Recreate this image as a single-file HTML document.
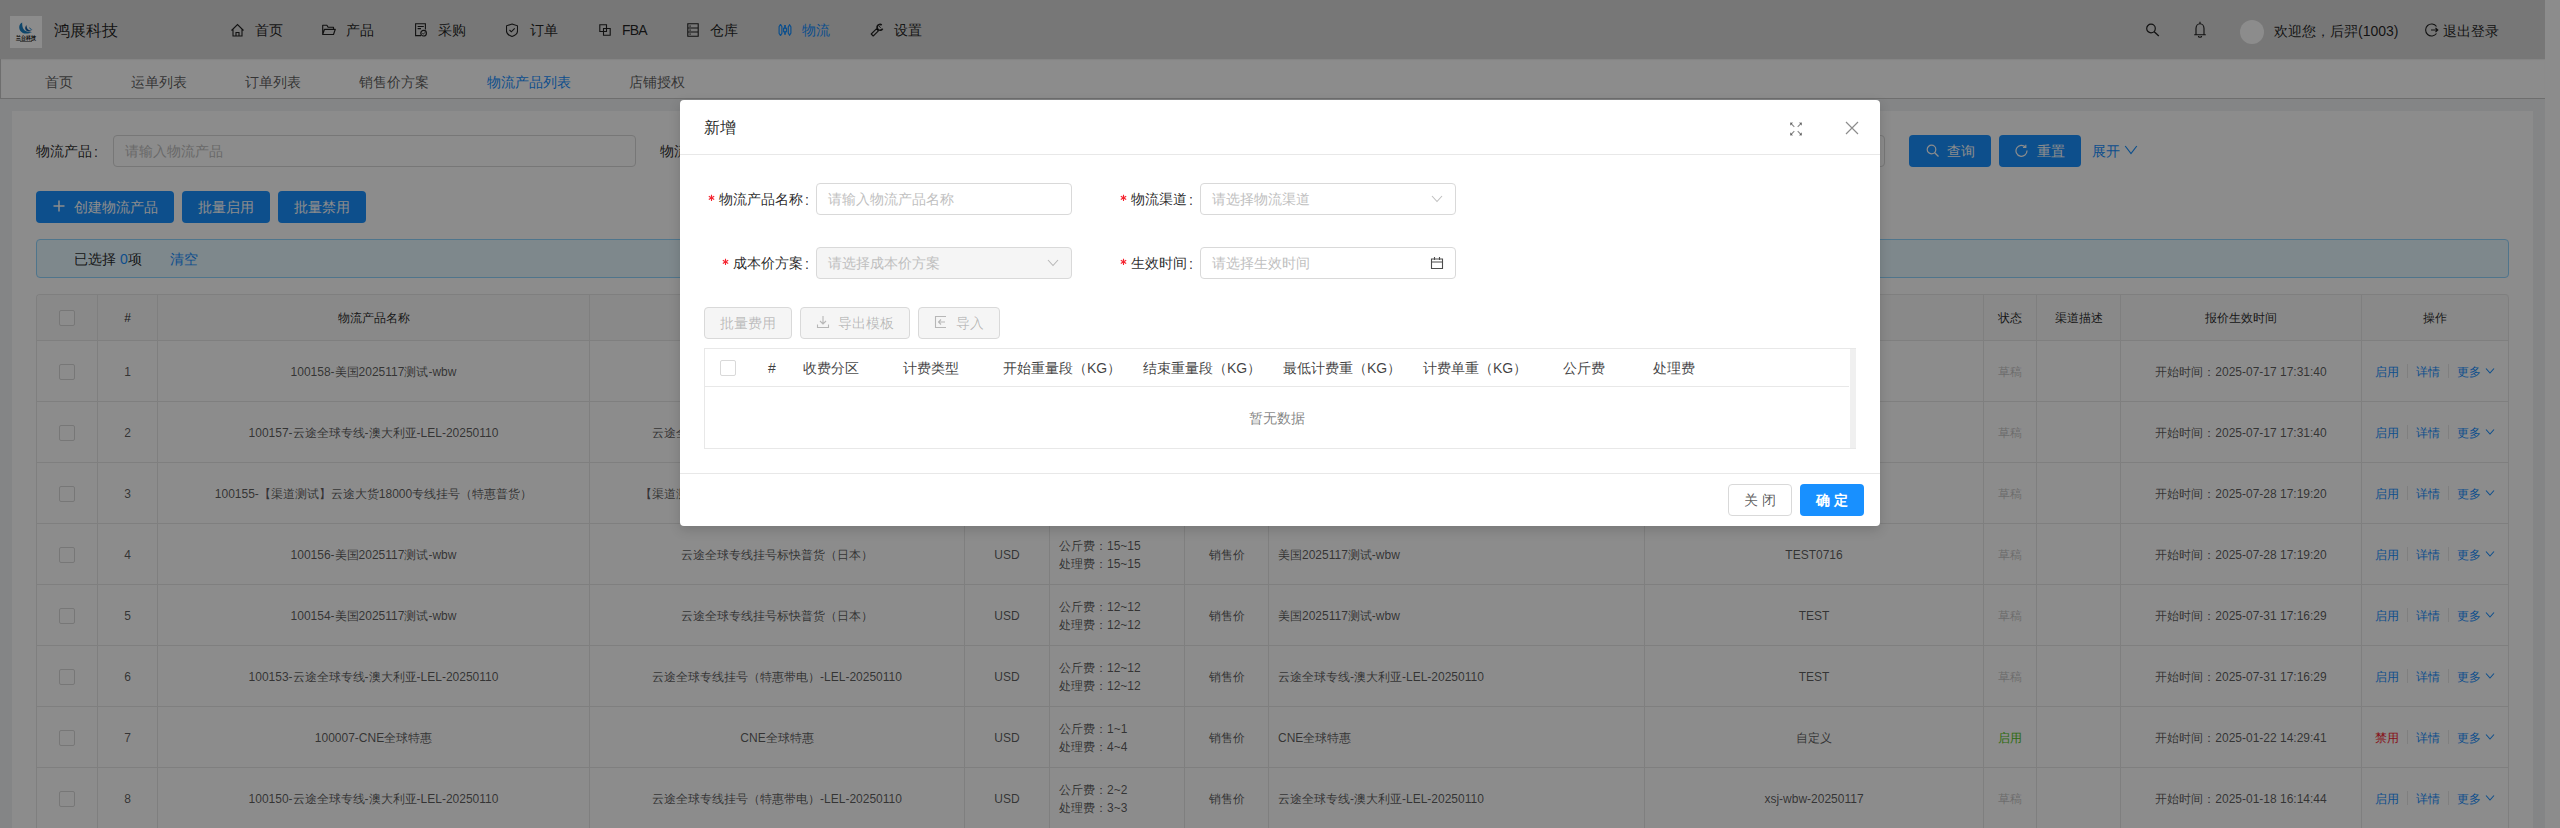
<!DOCTYPE html><html><head><meta charset="utf-8"><style>

*{box-sizing:border-box;margin:0;padding:0}
html,body{width:2560px;height:828px;overflow:hidden;background:#f0f2f5;font-family:"Liberation Sans", sans-serif;color:rgba(0,0,0,.65)}
.a{position:absolute}
.t{position:absolute;white-space:nowrap;line-height:1}
#hdr{position:absolute;left:0;top:0;width:2545px;height:59px;background:#d9d9d9}
#sub{position:absolute;left:0;top:59px;width:2545px;height:40px;background:#fff;border-bottom:1px solid #c8c8c8;border-left:1px solid #c8c8c8;box-shadow:inset 0 1px 1px rgba(0,0,0,.06)}
#sb{position:absolute;left:2545px;top:0;width:15px;height:828px;background:#fff}
#card{position:absolute;left:12px;top:111px;width:2521px;height:717px;background:#fff}
.btnp{position:absolute;background:#1890ff;border-radius:4px;color:#fff;font-size:14px;line-height:32px;height:32px;text-align:center;white-space:nowrap}
.inp{position:absolute;border:1px solid #d9d9d9;border-radius:4px;background:#fff;height:32px}
.ph{position:absolute;color:#bfbfbf;font-size:14px;line-height:1;white-space:nowrap}
table.g{position:absolute;left:36px;top:294px;border-collapse:separate;border-spacing:0;border-top:1px solid #e8e8e8;border-left:1px solid #e8e8e8;border-radius:4px 4px 0 0;table-layout:fixed;font-size:12px;color:rgba(0,0,0,.65)}
table.g td,table.g th{border-right:1px solid #e8e8e8;border-bottom:1px solid #e8e8e8;text-align:center;padding:0;white-space:nowrap;overflow:hidden}
table.g th{background:#fafafa;font-weight:normal;color:rgba(0,0,0,.85);height:46px;padding-top:1px}
table.g th:first-child{border-top-left-radius:4px} table.g th:last-child{border-top-right-radius:4px}
table.g td{height:61px;padding-top:2px}
.cb{display:inline-block;width:16px;height:16px;border:1px solid #d9d9d9;border-radius:2px;background:#fff;vertical-align:middle}
#ov{position:absolute;left:0;top:0;width:2560px;height:828px;background:rgba(0,0,0,.45)}
#modal{position:absolute;left:680px;top:100px;width:1200px;height:426px;background:#fff;border-radius:4px;box-shadow:0 4px 12px rgba(0,0,0,.15)}

</style></head><body>
<div id="hdr">
<div class="a" style="left:10px;top:16px;width:32px;height:32px;background:#fff"></div>
<svg class="a" style="left:10px;top:16px" width="32" height="32" viewBox="0 0 32 32">
<path d="M12.2 6.6 C8.3 8 8 14.6 12.8 16.9 C15.4 18.1 19 17.6 22.2 16.2 C18.6 16.6 14.6 15.6 13.2 12.6 C12.2 10.6 12.1 8.2 12.2 6.6 Z" fill="#1b80c4"/>
<path d="M16.6 9.2 C14.6 10.6 14.6 14.2 17.6 15.2 C19.1 15.7 20.7 15.4 21.8 14.7 C19.7 14.7 17.7 13.7 17.1 12.2 C16.7 11.2 16.5 10.2 16.6 9.2 Z" fill="#155c9e"/>
<path d="M19.4 11 C19 12.6 20.2 14.1 22.8 13.6 C21.6 13.3 20.4 12.5 19.4 11 Z" fill="#2a8bd2"/>
<text x="16" y="23.8" text-anchor="middle" font-size="6" font-weight="bold" fill="#222" textLength="20" lengthAdjust="spacingAndGlyphs">兰台科技</text>
<rect x="10" y="25" width="12" height="0.8" fill="#666"/>
</svg>
<div class="t" style="left:54px;top:23px;font-size:16px;color:rgba(0,0,0,.85)">鸿展科技</div>
<svg class="a" style="left:230px;top:23px;color:rgba(0,0,0,.85)" width="15" height="14" viewBox="0 0 15 14"><path d="M1.5 7.5 L7.5 1.5 L13.5 7.5 M3 6 V13 H12 V6 M6 13 V9.5 H9 V13" fill="none" stroke="currentColor" stroke-width="1.1"/></svg>
<div class="t" style="left:255px;top:23px;font-size:14px;color:rgba(0,0,0,.85)">首页</div>
<svg class="a" style="left:321px;top:23px;color:rgba(0,0,0,.85)" width="15" height="14" viewBox="0 0 15 14"><path d="M1.7 11.5 V2.2 H5.9 L7.1 4.2 H12.5 V6.3 M3.5 6.3 H14.3 L12.5 11.5 H1.7 Z" fill="none" stroke="currentColor" stroke-width="1.15" stroke-linejoin="round"/></svg>
<div class="t" style="left:346px;top:23px;font-size:14px;color:rgba(0,0,0,.85)">产品</div>
<svg class="a" style="left:414px;top:23px;color:rgba(0,0,0,.85)" width="13" height="14" viewBox="0 0 13 14"><path d="M7 12.6 H1.6 V0.7 H11.4 V6.4 M3.6 3.5 H9.8 M3.6 5.6 H7" fill="none" stroke="currentColor" stroke-width="1.1"/><circle cx="9.6" cy="10.2" r="2.8" fill="none" stroke="currentColor" stroke-width="1.2"/><path d="M8.3 10.3 L9.3 11.2 L10.9 9.4" fill="none" stroke="currentColor" stroke-width=".9"/></svg>
<div class="t" style="left:438px;top:23px;font-size:14px;color:rgba(0,0,0,.85)">采购</div>
<svg class="a" style="left:506px;top:23px;color:rgba(0,0,0,.85)" width="12" height="14" viewBox="0 0 12 14"><path d="M6 1 L11.5 2.8 V8 C11.5 10.5 9 12.5 6 13.5 C3 12.5 0.5 10.5 0.5 8 V2.8 Z" fill="none" stroke="currentColor" stroke-width="1.1"/><path d="M3.5 7 L5.3 8.8 L8.7 5.3" fill="none" stroke="currentColor" stroke-width="1.1"/></svg>
<div class="t" style="left:530px;top:23px;font-size:14px;color:rgba(0,0,0,.85)">订单</div>
<svg class="a" style="left:599px;top:24px;color:rgba(0,0,0,.85)" width="12" height="12" viewBox="0 0 12 12"><path d="M0.8 0.8 H7.5 V7.5 H0.8 Z M4.5 4.5 H11.2 V11.2 H4.5 Z" fill="none" stroke="currentColor" stroke-width="1.1"/></svg>
<div class="t" style="left:622px;top:23px;font-size:14px;letter-spacing:-0.8px;color:rgba(0,0,0,.85)">FBA</div>
<svg class="a" style="left:687px;top:23px;color:rgba(0,0,0,.85)" width="12" height="14" viewBox="0 0 12 14"><path d="M0.8 0.8 H11.2 V13.2 H0.8 Z M0.8 5 H11.2 M0.8 9 H11.2" fill="none" stroke="currentColor" stroke-width="1.1"/><rect x="2.5" y="2.5" width="1.2" height="1.2" fill="currentColor"/><rect x="2.5" y="6.5" width="1.2" height="1.2" fill="currentColor"/><rect x="2.5" y="10.5" width="1.2" height="1.2" fill="currentColor"/></svg>
<div class="t" style="left:710px;top:23px;font-size:14px;color:rgba(0,0,0,.85)">仓库</div>
<svg class="a" style="left:778px;top:24px;color:#1890ff" width="14" height="12" viewBox="0 0 14 12"><path d="M2.5 0.4 L3.9 2.6 V9.4 L2.5 11.6 L1.1 9.4 V2.6 Z" fill="none" stroke="currentColor" stroke-width="1.2"/><rect x="5.6" y="4.3" width="2.9" height="3.4" fill="none" stroke="currentColor" stroke-width="1.2"/><path d="M7 1 V4 M7 8 V10.8" stroke="currentColor" stroke-width="1.8"/><path d="M11.6 0.8 L12.9 3 V9 L11.6 11.2 L10.3 9 V3 Z" fill="none" stroke="currentColor" stroke-width="1.2"/></svg>
<div class="t" style="left:802px;top:23px;font-size:14px;color:#1890ff">物流</div>
<svg class="a" style="left:870px;top:23px;color:rgba(0,0,0,.85)" width="14" height="14" viewBox="0 0 14 14"><path d="M1.2 11 L3.2 13 L8.4 7.8 L6.4 5.8 Z" fill="none" stroke="currentColor" stroke-width="1.1" stroke-linejoin="round"/><path d="M11.7 2.0 A2.9 2.9 0 1 0 12.6 5.6" fill="none" stroke="currentColor" stroke-width="1.7"/><path d="M9.2 3.2 L10.6 4.8" stroke="currentColor" stroke-width="1"/></svg>
<div class="t" style="left:894px;top:23px;font-size:14px;color:rgba(0,0,0,.85)">设置</div>
<svg class="a" style="left:2146px;top:23px" width="14" height="14" viewBox="0 0 14 14"><circle cx="5" cy="5.5" r="4.3" fill="none" stroke="rgba(0,0,0,.85)" stroke-width="1.2"/><path d="M8.2 8.7 L12.8 13" stroke="rgba(0,0,0,.85)" stroke-width="1.3"/></svg>
<svg class="a" style="left:2193px;top:21px" width="14" height="17" viewBox="0 0 14 17"><path d="M7 0.8 V2.6 M3 13.2 V7.6 C3 4.9 4.8 2.7 7 2.7 C9.2 2.7 11 4.9 11 7.6 V13.2 M1.2 13.7 H12.8 M5.4 14.9 C5.4 16.7 8.6 16.7 8.6 14.9" fill="none" stroke="rgba(0,0,0,.85)" stroke-width="1.15"/></svg>
<div class="a" style="left:2240px;top:20px;width:24px;height:24px;border-radius:50%;background:#fff"></div>
<div class="t" style="left:2274px;top:24px;font-size:14px;color:rgba(0,0,0,.85)">欢迎您，后羿(1003)</div>
<svg class="a" style="left:2425px;top:23px" width="14" height="14" viewBox="0 0 14 14"><path d="M11.5 3.5 A6 6 0 1 0 11.5 10.5" fill="none" stroke="rgba(0,0,0,.85)" stroke-width="1.1"/><path d="M6 7 H12.5 M10.5 5 L12.8 7 L10.5 9" fill="none" stroke="rgba(0,0,0,.85)" stroke-width="1.1"/></svg>
<div class="t" style="left:2443px;top:24px;font-size:14px;color:rgba(0,0,0,.85)">退出登录</div>
</div>
<div id="sub">
<div class="t" style="left:44px;top:16px;font-size:14px;color:rgba(0,0,0,.65)">首页</div>
<div class="t" style="left:130px;top:16px;font-size:14px;color:rgba(0,0,0,.65)">运单列表</div>
<div class="t" style="left:244px;top:16px;font-size:14px;color:rgba(0,0,0,.65)">订单列表</div>
<div class="t" style="left:358px;top:16px;font-size:14px;color:rgba(0,0,0,.65)">销售价方案</div>
<div class="t" style="left:486px;top:16px;font-size:14px;color:#1890ff">物流产品列表</div>
<div class="t" style="left:628px;top:16px;font-size:14px;color:rgba(0,0,0,.65)">店铺授权</div>
</div>
<div id="sb"></div>
<div id="card"></div>
<div class="t" style="left:36px;top:144px;font-size:14px;color:rgba(0,0,0,.85)">物流产品</div>
<div class="t" style="left:94px;top:145px;font-size:14px;color:rgba(0,0,0,.85)">:</div>
<div class="inp" style="left:113px;top:135px;width:523px"></div>
<div class="ph" style="left:125px;top:144px">请输入物流产品</div>
<div class="t" style="left:660px;top:144px;font-size:14px;color:rgba(0,0,0,.85)">物流渠道</div>
<div class="inp" style="left:1360px;top:135px;width:525px"></div>
<div class="btnp" style="left:1909px;top:135px;width:82px">&#8203;</div>
<svg class="a" style="left:1926px;top:144px" width="14" height="14" viewBox="0 0 14 14"><circle cx="5.5" cy="5.5" r="4.3" fill="none" stroke="#fff" stroke-width="1.2"/><path d="M8.7 8.7 L12.5 12.5" stroke="#fff" stroke-width="1.3"/></svg>
<div class="t" style="left:1947px;top:144px;font-size:14px;color:#fff">查询</div>
<div class="btnp" style="left:1999px;top:135px;width:82px"></div>
<svg class="a" style="left:2015px;top:144px" width="14" height="14" viewBox="0 0 14 14"><path d="M12 6.5 A5.5 5.5 0 1 1 10.5 3" fill="none" stroke="#fff" stroke-width="1.2"/><path d="M10.8 0.8 V3.5 H8" fill="none" stroke="#fff" stroke-width="1.2"/></svg>
<div class="t" style="left:2037px;top:144px;font-size:14px;color:#fff">重置</div>
<div class="t" style="left:2092px;top:144px;font-size:14px;color:#1890ff">展开</div>
<svg class="a" style="left:2124px;top:144px" width="14" height="12" viewBox="0 0 14 12"><path d="M1.2 2 L7 9.5 L12.8 2" fill="none" stroke="#1890ff" stroke-width="1.2"/></svg>
<div class="btnp" style="left:36px;top:191px;width:138px"></div>
<svg class="a" style="left:53px;top:200px" width="12" height="12" viewBox="0 0 12 12"><path d="M6 0.5 V11.5 M0.5 6 H11.5" stroke="#fff" stroke-width="1.5"/></svg>
<div class="t" style="left:74px;top:200px;font-size:14px;color:#fff">创建物流产品</div>
<div class="btnp" style="left:182px;top:191px;width:88px">批量启用</div>
<div class="btnp" style="left:278px;top:191px;width:88px">批量禁用</div>
<div class="a" style="left:36px;top:239px;width:2473px;height:39px;background:#e6f7ff;border:1px solid #91d5ff;border-radius:4px"></div>
<div class="t" style="left:74px;top:252px;font-size:14px;color:rgba(0,0,0,.85)">已选择 <span style="color:#1890ff">0</span>项</div>
<div class="t" style="left:170px;top:252px;font-size:14px;color:#1890ff">清空</div>
<table class="g"><colgroup><col style="width:61px"><col style="width:60px"><col style="width:432px"><col style="width:375px"><col style="width:85px"><col style="width:135px"><col style="width:84px"><col style="width:376px"><col style="width:339px"><col style="width:53px"><col style="width:84px"><col style="width:241px"><col style="width:147px"></colgroup>
<tr><th><span class="cb"></span></th><th>#</th><th>物流产品名称</th><th>物流渠道</th><th>币种</th><th>费用</th><th>价格类型</th><th>成本价方案</th><th>标签</th><th>状态</th><th>渠道描述</th><th>报价生效时间</th><th>操作</th></tr>
<tr><td><span class="cb"></span></td><td>1</td><td>100158-美国2025117测试-wbw</td><td>云途全球专线挂号标快普货（日本）</td><td>USD</td><td style="text-align:left;padding-left:9px;line-height:18px">公斤费：15~15<br>处理费：15~15</td><td>销售价</td><td style="text-align:left;padding-left:9px">美国2025117测试-wbw</td><td></td><td style="color:rgba(0,0,0,.25)">草稿</td><td></td><td>开始时间：2025-07-17 17:31:40</td><td><span style="color:#1890ff">启用</span><span style="display:inline-block;width:1px;height:14px;background:#e8e8e8;margin:0 8px;vertical-align:-2px"></span><span style="color:#1890ff">详情</span><span style="display:inline-block;width:1px;height:14px;background:#e8e8e8;margin:0 8px;vertical-align:-2px"></span><span style="color:#1890ff">更多 <svg width="10" height="8" viewBox="0 0 10 8" style="vertical-align:1px"><path d="M1 1.5 L5 6 L9 1.5" fill="none" stroke="#1890ff" stroke-width="1.1"/></svg></span></td></tr>
<tr><td><span class="cb"></span></td><td>2</td><td>100157-云途全球专线-澳大利亚-LEL-20250110</td><td>云途全球专线挂号（特惠带电）-LEL-20250110</td><td>USD</td><td style="text-align:left;padding-left:9px;line-height:18px">公斤费：12~12<br>处理费：12~12</td><td>销售价</td><td style="text-align:left;padding-left:9px">云途全球专线-澳大利亚-LEL-20250110</td><td></td><td style="color:rgba(0,0,0,.25)">草稿</td><td></td><td>开始时间：2025-07-17 17:31:40</td><td><span style="color:#1890ff">启用</span><span style="display:inline-block;width:1px;height:14px;background:#e8e8e8;margin:0 8px;vertical-align:-2px"></span><span style="color:#1890ff">详情</span><span style="display:inline-block;width:1px;height:14px;background:#e8e8e8;margin:0 8px;vertical-align:-2px"></span><span style="color:#1890ff">更多 <svg width="10" height="8" viewBox="0 0 10 8" style="vertical-align:1px"><path d="M1 1.5 L5 6 L9 1.5" fill="none" stroke="#1890ff" stroke-width="1.1"/></svg></span></td></tr>
<tr><td><span class="cb"></span></td><td>3</td><td>100155-【渠道测试】云途大货18000专线挂号（特惠普货）</td><td>【渠道测试】云途大货18000专线挂号（特惠普货）</td><td>USD</td><td style="text-align:left;padding-left:9px;line-height:18px">公斤费：12~12<br>处理费：12~12</td><td>销售价</td><td style="text-align:left;padding-left:9px">云途全球专线-澳大利亚-LEL-20250110</td><td></td><td style="color:rgba(0,0,0,.25)">草稿</td><td></td><td>开始时间：2025-07-28 17:19:20</td><td><span style="color:#1890ff">启用</span><span style="display:inline-block;width:1px;height:14px;background:#e8e8e8;margin:0 8px;vertical-align:-2px"></span><span style="color:#1890ff">详情</span><span style="display:inline-block;width:1px;height:14px;background:#e8e8e8;margin:0 8px;vertical-align:-2px"></span><span style="color:#1890ff">更多 <svg width="10" height="8" viewBox="0 0 10 8" style="vertical-align:1px"><path d="M1 1.5 L5 6 L9 1.5" fill="none" stroke="#1890ff" stroke-width="1.1"/></svg></span></td></tr>
<tr><td><span class="cb"></span></td><td>4</td><td>100156-美国2025117测试-wbw</td><td>云途全球专线挂号标快普货（日本）</td><td>USD</td><td style="text-align:left;padding-left:9px;line-height:18px">公斤费：15~15<br>处理费：15~15</td><td>销售价</td><td style="text-align:left;padding-left:9px">美国2025117测试-wbw</td><td>TEST0716</td><td style="color:rgba(0,0,0,.25)">草稿</td><td></td><td>开始时间：2025-07-28 17:19:20</td><td><span style="color:#1890ff">启用</span><span style="display:inline-block;width:1px;height:14px;background:#e8e8e8;margin:0 8px;vertical-align:-2px"></span><span style="color:#1890ff">详情</span><span style="display:inline-block;width:1px;height:14px;background:#e8e8e8;margin:0 8px;vertical-align:-2px"></span><span style="color:#1890ff">更多 <svg width="10" height="8" viewBox="0 0 10 8" style="vertical-align:1px"><path d="M1 1.5 L5 6 L9 1.5" fill="none" stroke="#1890ff" stroke-width="1.1"/></svg></span></td></tr>
<tr><td><span class="cb"></span></td><td>5</td><td>100154-美国2025117测试-wbw</td><td>云途全球专线挂号标快普货（日本）</td><td>USD</td><td style="text-align:left;padding-left:9px;line-height:18px">公斤费：12~12<br>处理费：12~12</td><td>销售价</td><td style="text-align:left;padding-left:9px">美国2025117测试-wbw</td><td>TEST</td><td style="color:rgba(0,0,0,.25)">草稿</td><td></td><td>开始时间：2025-07-31 17:16:29</td><td><span style="color:#1890ff">启用</span><span style="display:inline-block;width:1px;height:14px;background:#e8e8e8;margin:0 8px;vertical-align:-2px"></span><span style="color:#1890ff">详情</span><span style="display:inline-block;width:1px;height:14px;background:#e8e8e8;margin:0 8px;vertical-align:-2px"></span><span style="color:#1890ff">更多 <svg width="10" height="8" viewBox="0 0 10 8" style="vertical-align:1px"><path d="M1 1.5 L5 6 L9 1.5" fill="none" stroke="#1890ff" stroke-width="1.1"/></svg></span></td></tr>
<tr><td><span class="cb"></span></td><td>6</td><td>100153-云途全球专线-澳大利亚-LEL-20250110</td><td>云途全球专线挂号（特惠带电）-LEL-20250110</td><td>USD</td><td style="text-align:left;padding-left:9px;line-height:18px">公斤费：12~12<br>处理费：12~12</td><td>销售价</td><td style="text-align:left;padding-left:9px">云途全球专线-澳大利亚-LEL-20250110</td><td>TEST</td><td style="color:rgba(0,0,0,.25)">草稿</td><td></td><td>开始时间：2025-07-31 17:16:29</td><td><span style="color:#1890ff">启用</span><span style="display:inline-block;width:1px;height:14px;background:#e8e8e8;margin:0 8px;vertical-align:-2px"></span><span style="color:#1890ff">详情</span><span style="display:inline-block;width:1px;height:14px;background:#e8e8e8;margin:0 8px;vertical-align:-2px"></span><span style="color:#1890ff">更多 <svg width="10" height="8" viewBox="0 0 10 8" style="vertical-align:1px"><path d="M1 1.5 L5 6 L9 1.5" fill="none" stroke="#1890ff" stroke-width="1.1"/></svg></span></td></tr>
<tr><td><span class="cb"></span></td><td>7</td><td>100007-CNE全球特惠</td><td>CNE全球特惠</td><td>USD</td><td style="text-align:left;padding-left:9px;line-height:18px">公斤费：1~1<br>处理费：4~4</td><td>销售价</td><td style="text-align:left;padding-left:9px">CNE全球特惠</td><td>自定义</td><td style="color:#52c41a">启用</td><td></td><td>开始时间：2025-01-22 14:29:41</td><td><span style="color:#f5222d">禁用</span><span style="display:inline-block;width:1px;height:14px;background:#e8e8e8;margin:0 8px;vertical-align:-2px"></span><span style="color:#1890ff">详情</span><span style="display:inline-block;width:1px;height:14px;background:#e8e8e8;margin:0 8px;vertical-align:-2px"></span><span style="color:#1890ff">更多 <svg width="10" height="8" viewBox="0 0 10 8" style="vertical-align:1px"><path d="M1 1.5 L5 6 L9 1.5" fill="none" stroke="#1890ff" stroke-width="1.1"/></svg></span></td></tr>
<tr><td><span class="cb"></span></td><td>8</td><td>100150-云途全球专线-澳大利亚-LEL-20250110</td><td>云途全球专线挂号（特惠带电）-LEL-20250110</td><td>USD</td><td style="text-align:left;padding-left:9px;line-height:18px">公斤费：2~2<br>处理费：3~3</td><td>销售价</td><td style="text-align:left;padding-left:9px">云途全球专线-澳大利亚-LEL-20250110</td><td>xsj-wbw-20250117</td><td style="color:rgba(0,0,0,.25)">草稿</td><td></td><td>开始时间：2025-01-18 16:14:44</td><td><span style="color:#1890ff">启用</span><span style="display:inline-block;width:1px;height:14px;background:#e8e8e8;margin:0 8px;vertical-align:-2px"></span><span style="color:#1890ff">详情</span><span style="display:inline-block;width:1px;height:14px;background:#e8e8e8;margin:0 8px;vertical-align:-2px"></span><span style="color:#1890ff">更多 <svg width="10" height="8" viewBox="0 0 10 8" style="vertical-align:1px"><path d="M1 1.5 L5 6 L9 1.5" fill="none" stroke="#1890ff" stroke-width="1.1"/></svg></span></td></tr>
</table>
<div id="ov"></div>
<div id="modal">
<div class="t" style="left:24px;top:20px;font-size:16px;color:rgba(0,0,0,.85)">新增</div>
<div class="a" style="left:0;top:54px;width:1200px;height:1px;background:#e8e8e8"></div>
<svg class="a" style="left:1109px;top:21px" width="14" height="16" viewBox="0 0 14 16"><path d="M2 2.5 L5.3 5.8 M12 2.5 L8.7 5.8 M2 13.5 L5.3 10.2 M12 13.5 L8.7 10.2" stroke="rgba(0,0,0,.45)" stroke-width="1.1"/><path d="M1 1.5 H4.2 L1 4.7 Z M13 1.5 H9.8 L13 4.7 Z M1 14.5 H4.2 L1 11.3 Z M13 14.5 H9.8 L13 11.3 Z" fill="rgba(0,0,0,.45)"/></svg>
<svg class="a" style="left:1165px;top:21px" width="14" height="14" viewBox="0 0 14 14"><path d="M1 1 L13 13 M13 1 L1 13" fill="none" stroke="rgba(0,0,0,.45)" stroke-width="1.2"/></svg>
<svg class="a" style="left:28px;top:94px" width="7" height="8" viewBox="0 0 7 8"><path d="M3.5 0.8 V7 M0.8 2.3 L6.2 5.5 M6.2 2.3 L0.8 5.5" stroke="#f5222d" stroke-width="1.1"/></svg>
<div class="t" style="left:39px;top:92px;font-size:14px;color:rgba(0,0,0,.85)">物流产品名称</div>
<div class="t" style="left:125px;top:93px;font-size:14px;color:rgba(0,0,0,.85)">:</div>
<svg class="a" style="left:440px;top:94px" width="7" height="8" viewBox="0 0 7 8"><path d="M3.5 0.8 V7 M0.8 2.3 L6.2 5.5 M6.2 2.3 L0.8 5.5" stroke="#f5222d" stroke-width="1.1"/></svg>
<div class="t" style="left:451px;top:92px;font-size:14px;color:rgba(0,0,0,.85)">物流渠道</div>
<div class="t" style="left:509px;top:93px;font-size:14px;color:rgba(0,0,0,.85)">:</div>
<svg class="a" style="left:42px;top:158px" width="7" height="8" viewBox="0 0 7 8"><path d="M3.5 0.8 V7 M0.8 2.3 L6.2 5.5 M6.2 2.3 L0.8 5.5" stroke="#f5222d" stroke-width="1.1"/></svg>
<div class="t" style="left:53px;top:156px;font-size:14px;color:rgba(0,0,0,.85)">成本价方案</div>
<div class="t" style="left:125px;top:157px;font-size:14px;color:rgba(0,0,0,.85)">:</div>
<svg class="a" style="left:440px;top:158px" width="7" height="8" viewBox="0 0 7 8"><path d="M3.5 0.8 V7 M0.8 2.3 L6.2 5.5 M6.2 2.3 L0.8 5.5" stroke="#f5222d" stroke-width="1.1"/></svg>
<div class="t" style="left:451px;top:156px;font-size:14px;color:rgba(0,0,0,.85)">生效时间</div>
<div class="t" style="left:509px;top:157px;font-size:14px;color:rgba(0,0,0,.85)">:</div>
<div class="inp" style="left:136px;top:83px;width:256px"></div>
<div class="ph" style="left:148px;top:92px">请输入物流产品名称</div>
<div class="inp" style="left:520px;top:83px;width:256px"></div>
<div class="ph" style="left:532px;top:92px">请选择物流渠道</div>
<svg class="a" style="left:751px;top:94px" width="12" height="10" viewBox="0 0 12 10"><path d="M1 2 L6 7.5 L11 2" fill="none" stroke="rgba(0,0,0,.25)" stroke-width="1.1"/></svg>
<div class="inp" style="left:136px;top:147px;width:256px;background:#f5f5f5"></div>
<div class="ph" style="left:148px;top:156px">请选择成本价方案</div>
<svg class="a" style="left:367px;top:158px" width="12" height="10" viewBox="0 0 12 10"><path d="M1 2 L6 7.5 L11 2" fill="none" stroke="rgba(0,0,0,.25)" stroke-width="1.1"/></svg>
<div class="inp" style="left:520px;top:147px;width:256px"></div>
<div class="ph" style="left:532px;top:156px">请选择生效时间</div>
<svg class="a" style="left:750px;top:156px" width="14" height="14" viewBox="0 0 14 14"><path d="M1.5 3 H12.5 V12.5 H1.5 Z M1.5 6 H12.5 M4.5 1 V4 M9.5 1 V4" fill="none" stroke="rgba(0,0,0,.7)" stroke-width="1.1"/></svg>
<div class="a" style="left:24px;top:207px;width:88px;height:32px;background:#f5f5f5;border:1px solid #d9d9d9;border-radius:4px"></div>
<div class="a" style="left:120px;top:207px;width:110px;height:32px;background:#f5f5f5;border:1px solid #d9d9d9;border-radius:4px"></div>
<div class="a" style="left:238px;top:207px;width:82px;height:32px;background:#f5f5f5;border:1px solid #d9d9d9;border-radius:4px"></div>
<div class="t" style="left:40px;top:216px;font-size:14px;color:rgba(0,0,0,.25)">批量费用</div>
<svg class="a" style="left:136px;top:215px" width="14" height="14" viewBox="0 0 14 14"><path d="M7 1 V9 M4 6 L7 9 L10 6 M1.5 9.5 V12.5 H12.5 V9.5" fill="none" stroke="rgba(0,0,0,.25)" stroke-width="1.1"/></svg>
<div class="t" style="left:158px;top:216px;font-size:14px;color:rgba(0,0,0,.25)">导出模板</div>
<svg class="a" style="left:254px;top:215px" width="14" height="14" viewBox="0 0 14 14"><path d="M12 1.5 H1.5 V12.5 H12 M4.5 7 H11 M7 4.5 L4.5 7 L7 9.5" fill="none" stroke="rgba(0,0,0,.25)" stroke-width="1.1"/></svg>
<div class="t" style="left:276px;top:216px;font-size:14px;color:rgba(0,0,0,.25)">导入</div>
<div class="a" style="left:24px;top:248px;width:1152px;height:101px;border:1px solid #e8e8e8"></div>
<div class="a" style="left:25px;top:286px;width:1144px;height:1px;background:#e8e8e8"></div>
<div class="a" style="left:1170px;top:249px;width:6px;height:99px;background:#f0f0f0"></div>
<div class="a" style="left:40px;top:260px;width:16px;height:16px;border:1px solid #d9d9d9;border-radius:2px;background:#fff"></div>
<div class="t" style="left:88px;top:261px;font-size:14px;color:rgba(0,0,0,.75)">#</div>
<div class="t" style="left:123px;top:261px;font-size:14px;color:rgba(0,0,0,.75)">收费分区</div>
<div class="t" style="left:223px;top:261px;font-size:14px;color:rgba(0,0,0,.75)">计费类型</div>
<div class="t" style="left:323px;top:261px;font-size:14px;color:rgba(0,0,0,.75)">开始重量段（KG）</div>
<div class="t" style="left:463px;top:261px;font-size:14px;color:rgba(0,0,0,.75)">结束重量段（KG）</div>
<div class="t" style="left:603px;top:261px;font-size:14px;color:rgba(0,0,0,.75)">最低计费重（KG）</div>
<div class="t" style="left:743px;top:261px;font-size:14px;color:rgba(0,0,0,.75)">计费单重（KG）</div>
<div class="t" style="left:883px;top:261px;font-size:14px;color:rgba(0,0,0,.75)">公斤费</div>
<div class="t" style="left:973px;top:261px;font-size:14px;color:rgba(0,0,0,.75)">处理费</div>
<div class="t" style="left:569px;top:311px;font-size:14px;color:rgba(0,0,0,.5)">暂无数据</div>
<div class="a" style="left:0;top:373px;width:1200px;height:1px;background:#e8e8e8"></div>
<div class="a" style="left:1048px;top:384px;width:64px;height:32px;border:1px solid #d9d9d9;border-radius:4px;background:#fff;font-size:14px;line-height:30px;text-align:center;color:rgba(0,0,0,.65)">关 闭</div>
<div class="a" style="left:1120px;top:384px;width:64px;height:32px;border-radius:4px;background:#1890ff;font-size:14px;line-height:32px;text-align:center;color:#fff;font-weight:bold">确 定</div>
</div>
</body></html>
